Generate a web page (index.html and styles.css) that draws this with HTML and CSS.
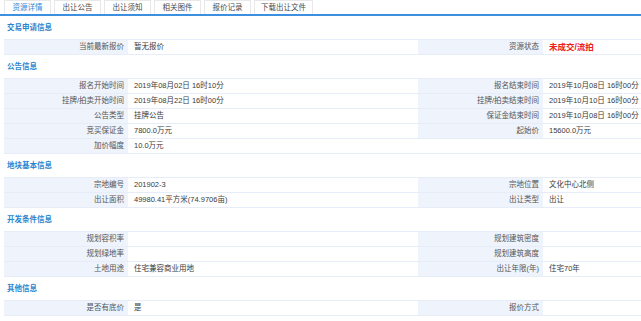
FILE: index.html
```html
<!DOCTYPE html>
<html lang="zh-CN">
<head>
  <meta charset="UTF-8">
  <title>资源详情</title>
  <link rel="stylesheet" href="styles.css">
</head>
<body>

  <div class="tabs">
    <div class="tab active">资源详情</div>
    <div class="tab">出让公告</div>
    <div class="tab">出让须知</div>
    <div class="tab">相关图件</div>
    <div class="tab">报价记录</div>
    <div class="tab">下载出让文件</div>
  </div>

  <div class="titre">交易申请信息</div>
  <div class="grille">
    <div class="lab">当前最新报价</div><div class="val">暂无报价</div>
    <div class="lab">资源状态</div><div class="val etat">未成交/流拍</div>
  </div>

  <div class="titre">公告信息</div>
  <div class="grille">
    <div class="lab">报名开始时间</div><div class="val">2019年08月02日 16时10分</div>
    <div class="lab">报名结束时间</div><div class="val">2019年10月08日 16时00分</div>
    <div class="lab">挂牌/拍卖开始时间</div><div class="val">2019年08月22日 16时00分</div>
    <div class="lab">挂牌/拍卖结束时间</div><div class="val">2019年10月10日 16时00分</div>
    <div class="lab">公告类型</div><div class="val">挂牌公告</div>
    <div class="lab">保证金结束时间</div><div class="val">2019年10月08日 16时00分</div>
    <div class="lab">竞买保证金</div><div class="val">7800.0万元</div>
    <div class="lab">起始价</div><div class="val">15600.0万元</div>
    <div class="lab">加价幅度</div><div class="val large">10.0万元</div>
  </div>

  <div class="titre">地块基本信息</div>
  <div class="grille">
    <div class="lab">宗地编号</div><div class="val">201902-3</div>
    <div class="lab">宗地位置</div><div class="val">文化中心北侧</div>
    <div class="lab">出让面积</div><div class="val">49980.41平方米(74.9706亩)</div>
    <div class="lab">出让类型</div><div class="val">出让</div>
  </div>

  <div class="titre">开发条件信息</div>
  <div class="grille">
    <div class="lab">规划容积率</div><div class="val"></div>
    <div class="lab">规划建筑密度</div><div class="val"></div>
    <div class="lab">规划绿地率</div><div class="val"></div>
    <div class="lab">规划建筑高度</div><div class="val"></div>
    <div class="lab">土地用途</div><div class="val">住宅兼容商业用地</div>
    <div class="lab">出让年限(年)</div><div class="val">住宅70年</div>
  </div>

  <div class="titre">其他信息</div>
  <div class="grille">
    <div class="lab">是否有底价</div><div class="val">是</div>
    <div class="lab">报价方式</div><div class="val"></div>
  </div>

</body>
</html>
```

FILE: styles.css
```css
body {
  margin: 0;
  font-family: "Liberation Sans", "Noto Sans CJK SC", sans-serif;
  font-size: 7.5px;
  color: #3a3a3a;
  background: #fff;
  overflow: hidden;
}
.tabs {
  display: flex;
  gap: 3px;
  padding-left: 4px;
  height: 14px;
  border-bottom: 2px solid #3d8fe0;
}
.tab {
  width: 47px;
  text-align: center;
  line-height: 14px;
  border: 1px solid #e8e8e8;
  border-bottom: none;
  box-sizing: border-box;
  color: #4a4a4a;
}
.tab:last-child {
  width: 59px;
}
.tab.active {
  color: #2f86d6;
}
.titre {
  height: 23px;
  line-height: 23px;
  padding-left: 7px;
  color: #2b86cf;
  font-weight: bold;
}
.grille {
  display: grid;
  grid-template-columns: 124px 290px 125px 1fr;
  row-gap: 1px;
  padding: 1px 0;
  margin-left: 4px;
  background: #e6edf8;
}
.lab, .val {
  height: 14px;
  line-height: 14px;
  white-space: nowrap;
  overflow: hidden;
}
.lab {
  background: #eef3fc;
  text-align: right;
  padding-right: 4px;
  color: #555;
}
.val {
  background: #fff;
  padding-left: 6px;
}
.val.large {
  grid-column: span 3;
}
.etat {
  color: #f0201a;
  font-weight: bold;
  font-size: 8.5px;
}
```
